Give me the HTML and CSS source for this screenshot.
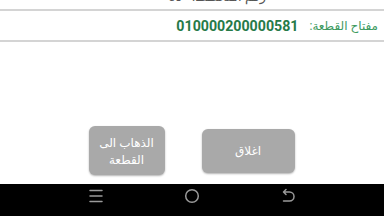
FILE: index.html
```html
<!DOCTYPE html>
<html lang="ar" dir="rtl">
<head>
<meta charset="utf-8">
<link rel="stylesheet" href="styles.css">
</head>
<body>
<div class="screen">
  <div class="clip"><span class="cut-text">رقم المخطط: ٤٥٠</span></div>
  <div class="rule"></div>
  <div class="key-row">
    <span class="key-label">مفتاح القطعة:</span>
    <span class="key-value">010000200000581</span>
  </div>
  <div class="rule"></div>
  <div class="content"></div>
  <div class="actions">
    <button class="btn btn-close">اغلاق</button>
    <button class="btn btn-go">الذهاب الى<br>القطعة</button>
  </div>
  <div class="navbar">
    <svg class="nav-icon" width="16" height="16" viewBox="0 0 16 16"><g stroke="#9a9a9a" stroke-width="1.5" stroke-linecap="round"><line x1="2" y1="2.5" x2="14" y2="2.5"/><line x1="2" y1="8" x2="14" y2="8"/><line x1="2" y1="13.5" x2="14" y2="13.5"/></g></svg>
    <svg class="nav-icon" width="16" height="16" viewBox="0 0 16 16"><circle cx="8" cy="8" r="6.3" fill="none" stroke="#9a9a9a" stroke-width="1.5"/></svg>
    <svg class="nav-icon" width="16" height="16" viewBox="0 0 16 16"><path d="M6 1.5 L3.5 4 L6 6.5 M3.8 4 H9.5 A4.5 4.5 0 0 1 9.5 13 H3.5" fill="none" stroke="#9a9a9a" stroke-width="1.5" stroke-linecap="round" stroke-linejoin="round"/></svg>
  </div>
</div>
</body>
</html>
```
FILE: styles.css
```css
html, body {
  margin: 0;
  padding: 0;
  background: #ffffff;
}
body {
  font-family: Roboto, "Noto Sans", "DejaVu Sans", sans-serif;
  direction: rtl;
}
.screen {
  width: 384px;
  height: 216px;
  display: flex;
  flex-direction: column;
  overflow: hidden;
}
.clip {
  height: 9px;
  overflow: hidden;
  display: flex;
  justify-content: center;
  padding-left: 50px;
}
.cut-text {
  font-size: 13px;
  line-height: 13px;
  color: #555;
  margin-top: -10px;
}
.rule {
  height: 2px;
  background: #d4d4d4;
  flex: none;
}
.key-row {
  height: 29px;
  display: flex;
  align-items: center;
  gap: 11px;
  padding-right: 6px;
}
.key-label {
  font-size: 12px;
  color: #3d9a60;
}
.key-value {
  font-size: 14.2px;
  font-weight: bold;
  color: #267a48;
  direction: ltr;
}
.content {
  flex: 1;
}
.actions {
  display: flex;
  justify-content: center;
  align-items: center;
  gap: 37px;
  margin-bottom: 9px;
  padding-right: 1px;
}
.btn {
  border: none;
  background: #a9a9a9;
  color: #ffffff;
  font-family: "Noto Sans", "DejaVu Sans", sans-serif;
  font-size: 12px;
  line-height: 17px;
  border-radius: 6px;
  box-shadow: 0 1px 2px rgba(0,0,0,0.3);
  padding: 0;
}
.btn-close {
  width: 93px;
  height: 44px;
}
.btn-go {
  width: 76px;
  height: 49px;
}
.navbar {
  box-sizing: border-box;
  height: 32px;
  background: #000000;
  display: flex;
  justify-content: space-around;
  align-items: center;
  padding: 0 48px 9px;
  direction: ltr;
  flex: none;
}
.nav-icon {
  display: block;
}
```
